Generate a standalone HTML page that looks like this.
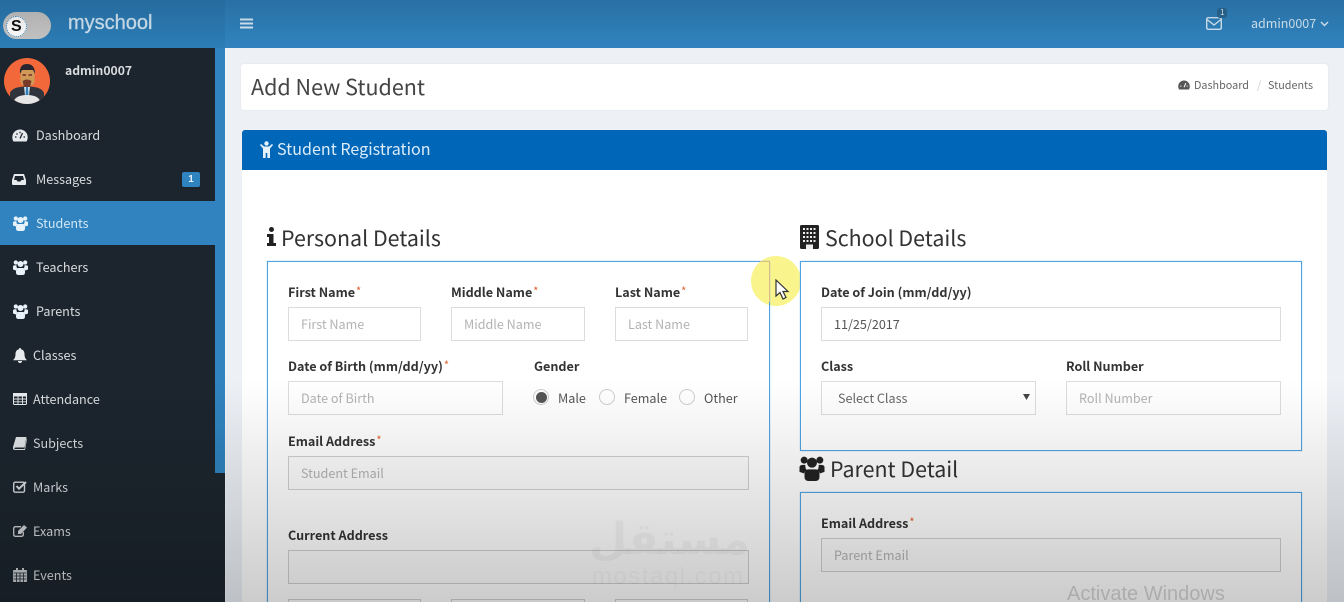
<!DOCTYPE html>
<html lang="en"><head><meta charset="utf-8"><title>Add New Student</title>
<style>
html,body{margin:0;padding:0;width:1344px;height:602px;overflow:hidden;background:#edf1f6;}
body{font-family:"Noto Sans CJK SC","Liberation Sans",sans-serif;font-size:12.6px;color:#333;}
#w{position:relative;width:1344px;height:602px;overflow:hidden;filter:blur(.3px);}
.a{position:absolute;}
.t{position:absolute;white-space:nowrap;line-height:20px;}
.nav{color:#d8dcdf;font-size:12.6px;left:36px;}
.lb{font-weight:700;color:#333;font-size:12.6px;}
.lb i{font-style:normal;color:#e2602c;font-weight:400;font-size:11px;margin-left:1px;position:relative;top:-2px;}
.in{position:absolute;box-sizing:border-box;border:1px solid #dcdcdc;background:#fff;height:34px;color:#b3b3b3;font-size:12.6px;line-height:31px;padding-left:12px;white-space:nowrap;}
.in.d{background:rgba(0,0,0,.012);border-color:#d0d0d0;}
.h{font-size:21.4px;color:#333;line-height:30px;}
.box{position:absolute;box-sizing:border-box;border:1px solid #4fa3e3;background:transparent;box-shadow:0 0 1px #8cc4ee;}
.r{position:absolute;width:16px;height:16px;border-radius:50%;box-sizing:border-box;border:1px solid #ccc;background:#fff;}
svg{position:absolute;display:block;}
</style></head><body><div id="w">
<!-- top bar -->
<div class="a" style="left:0;top:0;width:1344px;height:48px;background:#3083bf;"></div>
<div class="a" style="left:0;top:0;width:225px;height:48px;background:#2c7db7;"></div>
<!-- logo -->
<div class="a" style="left:3px;top:12px;width:48px;height:27px;border-radius:14px;background:#c6c6c6;"></div>
<div class="a" style="left:6px;top:16px;width:21px;height:21px;border-radius:50%;background:#fff;border:1px dotted #2c7db7;box-sizing:border-box;"></div>
<div class="t" style="left:11px;top:16px;font:900 16px/21px 'Liberation Sans',sans-serif;color:#111;">S</div>
<div class="t" style="left:68px;top:13px;font:400 20px/20px 'Liberation Sans',sans-serif;color:#d2e7f6;-webkit-text-stroke:.3px #d2e7f6;">myschool</div>
<!-- hamburger -->
<svg style="left:240px;top:17px" width="13" height="13" viewBox="0 0 13 13"><path d="M0 1.500h13v2H0zM0 5.500h13v2H0zM0 9.500h13v2H0z" fill="#d8ebf8"/></svg>
<!-- top right -->
<svg style="left:1206px;top:17px" width="16" height="13" viewBox="0 0 16 13"><rect x=".7" y=".7" width="14.600" height="11.600" rx="1.500" fill="none" stroke="#d8ebf8" stroke-width="1.400"/><path d="M1 2.500l7 5.500 7-5.500" fill="none" stroke="#d8ebf8" stroke-width="1.400"/></svg>
<div class="a" style="left:1217px;top:8px;width:10px;height:10px;border-radius:3px;background:#2a6a98;"></div>
<div class="t" style="left:1220px;top:8px;font-size:8px;line-height:10px;color:#e8f3fb;">1</div>
<div class="t" style="left:1251px;top:13px;font-size:12.500px;color:#d8ebf8;">admin0007</div>
<svg style="left:1320px;top:21px" width="9" height="6" viewBox="0 0 9 6"><path d="M1 1l3.500 3.500L8 1" fill="none" stroke="#d8ebf8" stroke-width="1.500"/></svg>
<!-- sidebar -->
<div class="a" style="left:0;top:48px;width:225px;height:554px;background:#1c252e;"></div>
<div class="a" style="left:215px;top:48px;width:10px;height:425px;background:#3083bf;"></div>
<div class="a" style="left:0;top:201px;width:225px;height:44px;background:#3083bf;"></div>
<div class="a" style="left:225px;top:48px;width:1px;height:554px;background:#f4f7fa;"></div>
<!-- avatar -->
<svg style="left:4px;top:58px" width="46" height="46" viewBox="0 0 46 46">
<defs><clipPath id="c"><circle cx="23" cy="23" r="23"/></clipPath></defs>
<g clip-path="url(#c)"><rect width="46" height="46" fill="#f2683a"/>
<path d="M6 46V35q2-5 10-6l7-1 7 1q8 1 10 6v11z" fill="#30343c"/>
<path d="M20 28h6l-1 10h-4z" fill="#d5e4f0"/><path d="M22 29h2l.5 9h-3z" fill="#2e7fb8"/>
<rect x="16.500" y="10" width="14" height="18" rx="5" fill="#cf9a58"/>
<path d="M16 16q-1-10 7-10t8 10l-2-4H18z" fill="#2a2630"/>
<path d="M18.500 23q4.500-3 9 0l-1.500 6h-6z" fill="#7a3a2a"/>
<path d="M18.500 17h3.500M24.500 17h3.500" stroke="#7a2a20" stroke-width="1.500"/>
<path d="M9 46q1-9 14-9t14 9z" fill="#e6e6e6"/></g></svg>
<div class="t" style="left:65px;top:60px;font-weight:700;font-size:12.200px;color:#d8dcdf;">admin0007</div>
<!-- nav -->
<svg style="left:12px;top:129px" width="16" height="13" viewBox="0 0 16 13"><path d="M8 .5A7.700 7.700 0 0 0 .3 8.200c0 1.600.4 3 1.200 4.300h13c.8-1.300 1.200-2.700 1.200-4.300A7.700 7.700 0 0 0 8 .5z" fill="#e8ebee"/><path d="M8 9.500L10.500 4M3 8h1.500M11.500 8H13M4.500 4.500l1 1M8 2.800v1.500" stroke="#1c252e" stroke-width="1.300"/></svg>
<div class="t nav" style="top:125px">Dashboard</div>
<svg style="left:12px;top:174px" width="14" height="11" viewBox="0 0 14 11"><path d="M2 0h10l2 6v4a1 1 0 0 1-1 1H1a1 1 0 0 1-1-1V6z" fill="#e8ebee"/><path d="M3 2h8l1 4H9.500L8.500 7.500h-3L4.500 6H2z" fill="#1c252e"/></svg>
<div class="t nav" style="top:169px">Messages</div>
<div class="a" style="left:182px;top:172px;width:18px;height:15px;border-radius:2px;background:#2f83bf;color:#e8f3fb;font:700 10px/15px 'Liberation Sans',sans-serif;text-align:center;">1</div>
<svg style="left:13px;top:216px" width="15" height="15" viewBox="0 0 15 15"><g fill="#e8f2fa" id="u"><circle cx="2.800" cy="2.500" r="2.100"/><circle cx="12.200" cy="2.500" r="2.100"/><circle cx="7.500" cy="4" r="3"/><path d="M0 9.500V6.500Q.3 5.300 2 5.300h1.500Q3.300 7.500 4.500 8.500 3 9.300 2.800 10.500zM15 9.500V6.500Q14.700 5.300 13 5.300h-1.500q.2 2.200-1 3.200 1.500.8 1.700 2z"/><path d="M5 8h5q2 .5 2 3v1.500q0 2.500-2.500 2.500h-4Q3 15 3 12.500V11q0-2.500 2-3z"/></g></svg>
<div class="t nav" style="top:213px;color:#d2e7f6">Students</div>
<svg style="left:13px;top:260px" width="15" height="15" viewBox="0 0 15 15"><use href="#u"/></svg>
<div class="t nav" style="top:257px">Teachers</div>
<svg style="left:13px;top:304px" width="15" height="15" viewBox="0 0 15 15"><use href="#u"/></svg>
<div class="t nav" style="top:301px">Parents</div>
<svg style="left:13px;top:348px" width="14" height="15" viewBox="0 0 14 15"><path d="M7 0a1 1 0 0 1 1 1.200c2.500.5 3.500 2.500 3.500 5 0 3 1 4.500 2.500 6H0c1.500-1.500 2.500-3 2.500-6 0-2.500 1-4.500 3.500-5A1 1 0 0 1 7 0zM5 13h4a2 2 0 0 1-4 0z" fill="#e8ebee"/></svg>
<div class="t nav" style="top:345px;left:33px">Classes</div>
<svg style="left:13px;top:393px" width="14" height="12" viewBox="0 0 14 12"><rect x=".5" y=".5" width="13" height="11" rx="1" fill="none" stroke="#e8ebee"/><path d="M0 0h14v3H0zM.5 6h13M.5 8.800h13M5 3v8.500M9.500 3v8.500" stroke="#e8ebee" fill="#e8ebee" stroke-width=".9"/></svg>
<div class="t nav" style="top:389px;left:33px">Attendance</div>
<svg style="left:13px;top:437px" width="14" height="13" viewBox="0 0 14 13"><path d="M3 0h10.500L11.500 10.500H3q-2 0-1.500 1.500h10l2-10.500.5.500L12 13H2Q-.5 13 0 10z" fill="#e0e3e6"/></svg>
<div class="t nav" style="top:433px;left:33px">Subjects</div>
<svg style="left:13px;top:481px" width="14" height="12" viewBox="0 0 14 12"><rect x=".7" y="1.200" width="10.800" height="10" rx="1.500" fill="none" stroke="#d8dbde" stroke-width="1.400"/><path d="M3.500 5l2.500 2.700L13 1" fill="none" stroke="#d8dbde" stroke-width="2"/></svg>
<div class="t nav" style="top:477px;left:33px">Marks</div>
<svg style="left:13px;top:525px" width="14" height="12" viewBox="0 0 14 12"><path d="M8 1.700H2.500Q.7 1.700.7 3.500v6q0 1.800 1.800 1.800h6q1.800 0 1.800-1.800V7" fill="none" stroke="#d0d3d6" stroke-width="1.300"/><path d="M5 6l6-6 3 2.500-6 6.500H5z" fill="#d0d3d6"/></svg>
<div class="t nav" style="top:521px;left:33px">Exams</div>
<svg style="left:13px;top:568px" width="14" height="14" viewBox="0 0 14 14"><path d="M1 2h12a1 1 0 0 1 1 1v10a1 1 0 0 1-1 1H1a1 1 0 0 1-1-1V3a1 1 0 0 1 1-1z" fill="#c8cbce"/><path d="M3 0h2v3H3zM9 0h2v3H9z" fill="#c8cbce"/><path d="M.5 5h13M.5 8h13M.5 11h13M3.500 5v9M7 5v9M10.500 5v9" stroke="#1c252e" stroke-width=".8"/></svg>
<div class="t nav" style="top:565px;left:33px">Events</div>

<!-- page header -->
<div class="a" style="left:241px;top:64px;width:1087px;height:46px;background:#fff;border-radius:3px;box-shadow:0 0 1px #ccd3da;"></div>
<div class="t" style="left:251px;top:72px;font-size:21.500px;line-height:30px;color:#444;">Add New Student</div>
<svg style="left:1178px;top:80px" width="12" height="10" viewBox="0 0 16 13"><path d="M8 .5A7.700 7.700 0 0 0 .3 8.200c0 1.600.4 3 1.200 4.300h13c.8-1.300 1.200-2.700 1.200-4.300A7.700 7.700 0 0 0 8 .5z" fill="#555"/><path d="M8 9.500L10.500 4M3 8h1.500M11.500 8H13" stroke="#fff" stroke-width="1.300"/></svg>
<div class="t" style="left:1194px;top:75px;font-size:10.800px;color:#666;">Dashboard</div>
<div class="t" style="left:1257px;top:75px;font-size:10.800px;color:#ccc;">/</div>
<div class="t" style="left:1268px;top:75px;font-size:10.800px;color:#666;">Students</div>

<!-- panel -->
<div class="a" style="left:242px;top:130px;width:1085px;height:472px;background:#fff;border-radius:3px 3px 0 0;"></div>
<div class="a" style="left:242px;top:130px;width:1085px;height:40px;background:#0067b8;border-radius:3px 3px 0 0;"></div>
<svg style="left:260px;top:141px" width="13" height="17" viewBox="0 0 13 17"><circle cx="6.500" cy="2.500" r="2.200" fill="#e4f0fa"/><path d="M1 3l3 2.500h5L12 3l1 1-3 3.500V17H7.300v-5H5.700v5H3V7.500L0 4z" fill="#e4f0fa"/></svg>
<div class="t" style="left:277px;top:138px;font-size:16.100px;color:#dcecf9;">Student Registration</div>

<!-- Personal details -->
<svg style="left:267px;top:227px" width="9" height="19" viewBox="0 0 9 19"><circle cx="4.500" cy="2.500" r="2.500" fill="#222"/><path d="M0 7h6.500v9H9v3H0v-3h2V10H0z" fill="#222"/></svg>
<div class="t h" style="left:281px;top:223px">Personal Details</div>

<!-- highlight -->
<div class="a" style="left:751px;top:256px;width:50px;height:50px;border-radius:50%;background:#f9f58c;"></div>

<div class="box" style="left:267px;top:261px;width:503px;height:360px;"></div>
<div class="a" style="left:760px;top:261px;width:10px;height:1px;background:#d8c07c;"></div>
<div class="a" style="left:769px;top:261px;width:1px;height:41px;background:#d8b98a;"></div>
<div class="t lb" style="left:288px;top:282px">First Name<i>*</i></div>
<div class="t lb" style="left:451px;top:282px">Middle Name<i>*</i></div>
<div class="t lb" style="left:615px;top:282px">Last Name<i>*</i></div>
<div class="in" style="left:288px;top:307px;width:133px;">First Name</div>
<div class="in" style="left:451px;top:307px;width:134px;">Middle Name</div>
<div class="in" style="left:615px;top:307px;width:133px;">Last Name</div>
<div class="t lb" style="left:288px;top:356px">Date of Birth (mm/dd/yy)<i>*</i></div>
<div class="in" style="left:288px;top:381px;width:215px;">Date of Birth</div>
<div class="t lb" style="left:534px;top:356px">Gender</div>
<div class="r" style="left:533px;top:389px;"></div>
<div class="a" style="left:536px;top:392px;width:11px;height:11px;border-radius:50%;background:#555;"></div>
<div class="t" style="left:558px;top:388px;color:#555;">Male</div>
<div class="r" style="left:599px;top:389px;"></div>
<div class="t" style="left:624px;top:388px;color:#555;">Female</div>
<div class="r" style="left:679px;top:389px;"></div>
<div class="t" style="left:704px;top:388px;color:#555;">Other</div>
<div class="t lb" style="left:288px;top:431px">Email Address<i>*</i></div>
<div class="in d" style="left:288px;top:456px;width:461px;">Student Email</div>
<div class="t lb" style="left:288px;top:525px">Current Address</div>
<div class="in d" style="left:288px;top:550px;width:461px;"></div>
<div class="in d" style="left:288px;top:599px;width:133px;"></div>
<div class="in d" style="left:451px;top:599px;width:134px;"></div>
<div class="in d" style="left:615px;top:599px;width:133px;"></div>

<!-- cursor -->
<svg style="left:775px;top:279px" width="15" height="22" viewBox="0 0 15 22"><path d="M1 1v16l4-3.500 3 6.500 3-1.500-3-6h5z" fill="#fff" stroke="#333" stroke-width="1.200"/></svg>

<!-- School details -->
<svg style="left:800px;top:225px" width="19" height="24" viewBox="0 0 19 24"><rect width="19" height="24" rx="1.500" fill="#222"/><g fill="#eee"><path d="M3 3h2v2H3zM6.500 3h2v2h-2zM10 3h2v2h-2zM13.500 3h2v2h-2zM3 7h2v2H3zM6.500 7h2v2h-2zM10 7h2v2h-2zM13.500 7h2v2h-2zM3 11h2v2H3zM6.500 11h2v2h-2zM10 11h2v2h-2zM13.500 11h2v2h-2zM3 15h2v2H3zM6.500 15h2v2h-2zM10 15h2v2h-2zM13.500 15h2v2h-2zM6 19.500h7V24H6z"/></g></svg>
<div class="t h" style="left:825px;top:223px">School Details</div>
<div class="box" style="left:800px;top:261px;width:502px;height:190px;"></div>
<div class="t lb" style="left:821px;top:282px">Date of Join (mm/dd/yy)</div>
<div class="in" style="left:821px;top:307px;width:460px;color:#555;">11/25/2017</div>
<div class="t lb" style="left:821px;top:356px">Class</div>
<div class="in" style="left:821px;top:381px;width:215px;color:#666;padding-left:16px;">Select Class</div>
<svg style="left:1023px;top:394px" width="7" height="6" viewBox="0 0 7 6"><path d="M0 0h7L3.500 6z" fill="#444"/></svg>
<div class="t lb" style="left:1066px;top:356px">Roll Number</div>
<div class="in" style="left:1066px;top:381px;width:215px;">Roll Number</div>

<!-- Parent -->
<svg style="left:799px;top:456px" width="26" height="25" viewBox="0 0 15 15"><g fill="#222"><circle cx="2.800" cy="2.500" r="2.100"/><circle cx="12.200" cy="2.500" r="2.100"/><circle cx="7.500" cy="4" r="3"/><path d="M0 9.500V6.500Q.3 5.300 2 5.300h1.500Q3.300 7.500 4.500 8.500 3 9.300 2.800 10.500zM15 9.500V6.500Q14.700 5.300 13 5.300h-1.500q.2 2.200-1 3.200 1.500.8 1.700 2z"/><path d="M5 8h5q2 .5 2 3v1.500q0 2.500-2.500 2.500h-4Q3 15 3 12.500V11q0-2.500 2-3z"/></g></svg>
<div class="t h" style="left:830px;top:454px">Parent Detail</div>
<div class="box" style="left:800px;top:492px;width:502px;height:130px;"></div>
<div class="t lb" style="left:821px;top:513px">Email Address<i>*</i></div>
<div class="in d" style="left:821px;top:538px;width:460px;">Parent Email</div>

<!-- watermark -->
<div class="t" dir="rtl" style="left:590px;top:510px;width:160px;text-align:center;font:700 44px/60px 'DejaVu Sans',sans-serif;color:rgba(0,0,0,.04);">مستقل</div>
<div class="t" style="left:592px;top:564px;font:400 24px/26px 'Liberation Sans',sans-serif;letter-spacing:1.500px;color:rgba(0,0,0,.03);">mostaql.com</div>
<div class="t" style="left:1067px;top:582px;font:400 20px/24px 'Liberation Sans',sans-serif;color:rgba(0,0,0,.17);">Activate Windows</div>

<!-- video gradients -->
<div class="a" style="left:0;top:0;width:1344px;height:48px;background:linear-gradient(rgba(0,0,0,.14),rgba(0,0,0,0));pointer-events:none;"></div>
<div class="a" style="left:0;top:380px;width:1344px;height:222px;background:linear-gradient(rgba(0,0,0,0),rgba(0,0,0,.2));pointer-events:none;"></div>
</div></body></html>
